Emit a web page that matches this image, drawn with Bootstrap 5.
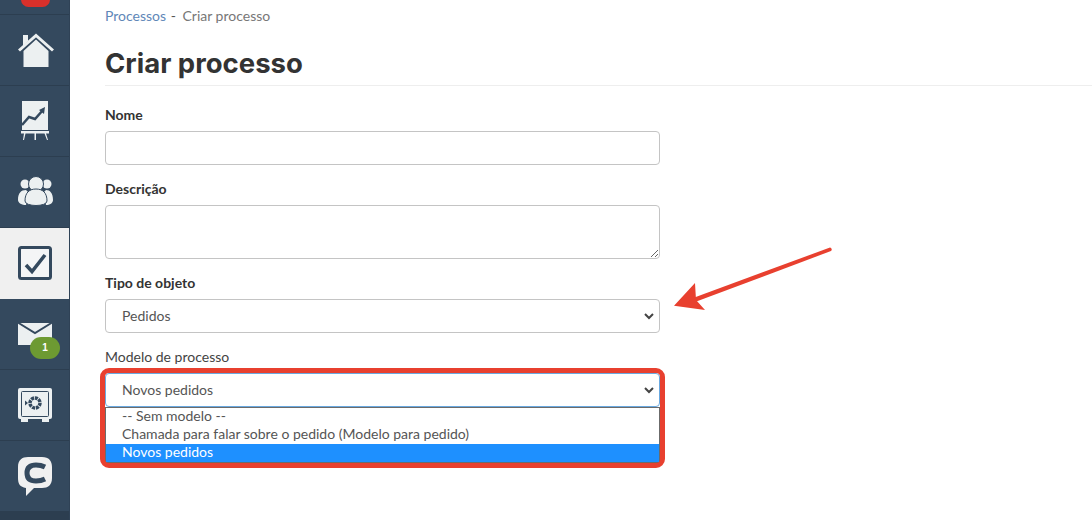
<!DOCTYPE html>
<html lang="pt">
<head>
<meta charset="utf-8">
<title>Criar processo</title>
<link href="https://cdn.jsdelivr.net/npm/bootstrap@5.3.0/dist/css/bootstrap.min.css" rel="stylesheet">
<style>
html,body{height:520px;overflow:hidden}
body{font-family:Lato,"Liberation Sans",sans-serif;font-size:14px;color:#333;background:#fff}
.rail{width:70px;height:520px;background:#34495e;flex:none;border-right:1px solid #2f4256;overflow:hidden}
.rail-top{height:15px;border-bottom:1px solid #2c3e50;position:relative}
.rail-pill{position:absolute;left:21px;top:-8px;width:29px;height:15px;border-radius:8px;background:#d9302b}
.rail-item{height:71px;border-bottom:1px solid #2c3e50;position:relative}
.rail-item.on{background:#f0f0f0;border-bottom:0;margin-right:-1px}
.rail-foot{height:8px;background:#2c3e50}
.rail-count{position:absolute;left:30px;top:38px;width:30px;height:22px;border-radius:11px;background:#6d9a32;color:#fff;font:700 10px/21px "Liberation Sans",sans-serif;text-align:center}
.page{flex:1 1 auto;position:relative;padding:0 0 0 35px;min-width:0}
.crumbs{height:34px;padding-top:6px;line-height:20px;color:#777}
.crumbs a{color:#5f87b8;text-decoration:none}
.crumbs span{color:#555;margin:0 3px 0 1px}
.head{font-family:Inter,sans-serif;font-weight:700;font-size:27.500px;line-height:34px;height:52px;padding-top:12px;margin:0;color:#333;border-bottom:1px solid #eee}
.formbox{width:555px;padding-top:19px}
.lbl{display:block;line-height:20px;height:20px;margin:0 0 6px;font-weight:700;color:#333}
.lbl.thin{font-weight:400;color:#444}
.fld{border:1px solid #c4c4c4;border-radius:4px;box-shadow:none;font-size:14px;color:#555;font-family:inherit;margin-bottom:14px}
.fld.short{height:34px;min-height:34px;padding:0 16px 2px}
.fld.tall{height:54px;min-height:54px}
.form-select.fld{background-image:url("data:image/svg+xml,%3csvg xmlns='http://www.w3.org/2000/svg' viewBox='0 0 10 7'%3e%3cpath fill='none' stroke='%23444' stroke-width='2' d='M1 1l4 4 4-4'/%3e%3c/svg%3e");background-size:10px 7px;background-position:right 5px center}
.fld.focus{border-color:#6aa9e0;margin-bottom:0}
.picker{position:relative;height:34px}
.pop{position:absolute;left:0;right:0;top:34px;border:1px solid #6b6b6b;background:#fff;padding:0;line-height:16px;color:#555;z-index:2}
.pop div{height:18px;padding-left:16px}
.pop .sel{background:#1e90ff;color:#fff}
.ring{position:absolute;left:30px;top:368px;width:565px;height:100px;border:5px solid #e8402f;border-radius:9px;z-index:3;pointer-events:none}
.pointer{position:absolute;left:600px;top:240px;z-index:3}
</style>
</head>
<body>
<div class="d-flex">
<nav class="rail">
 <div class="rail-top"><div class="rail-pill"></div></div>
 <div class="rail-item"><svg width="70" height="71" viewBox="0 0 70 71"><path fill="#ecf0f1" d="M23 20h5v6l-5 5zM23.500 36L36 24.500 48.500 36v16h-25z"/><path fill="none" stroke="#ecf0f1" stroke-width="3" d="M19 35.500L36 20.500 53 35.500"/></svg></div>
 <div class="rail-item"><svg width="70" height="71" viewBox="0 0 70 71"><path fill="#ecf0f1" d="M22 15h26v29H22z"/><path fill="none" stroke="#34495e" stroke-width="2.500" d="M22 39l7-8 6 2 8-9"/><path fill="#34495e" d="M45 21l-1 7-5-4z"/><path fill="#ecf0f1" d="M21 45h28v2.500H21zM24 47.500h1.500L24 54h-1zM34.500 47.500h1.500V54h-1.500zM44.500 47.500H46l2 6.500h-1z"/></svg></div>
 <div class="rail-item"><svg width="70" height="71" viewBox="0 0 70 71"><g fill="#ecf0f1"><circle cx="25" cy="27" r="4.500"/><circle cx="47" cy="27" r="4.500"/><path d="M18 43c0-7 3-10 8-10l3 3-3 12c-4 0-8-2-8-5zM53 43c0-7-3-10-7-10l-3 3 3 12c4 0 7-2 7-5z"/><circle cx="36" cy="27" r="7.500" stroke="#34495e"/><path stroke="#34495e" d="M25 44c0-8 4-12 11-12s11 4 11 12c0 6-22 6-22 0z"/></g></svg></div>
 <div class="rail-item on"><svg width="70" height="71" viewBox="0 0 70 71"><rect x="19.500" y="19.500" width="31" height="31" rx="2" fill="#f4f5f6" stroke="#34495e" stroke-width="3"/><path fill="none" stroke="#34495e" stroke-width="3.500" d="M26 37l6 6.500 13-16.500"/></svg></div>
 <div class="rail-item"><svg width="70" height="71" viewBox="0 0 70 71"><path fill="#ecf0f1" d="M18 24h34v22H18z"/><path fill="none" stroke="#34495e" stroke-width="2" d="M17 23l18 11 18-11"/></svg><span class="rail-count">1</span></div>
 <div class="rail-item"><svg width="70" height="71" viewBox="0 0 70 71"><rect x="18" y="18" width="34" height="31" rx="2" fill="#ecf0f1"/><path fill="#ecf0f1" d="M21 49h7v3h-7zM42 49h7v3h-7z"/><rect x="21.500" y="21.500" width="27" height="25" rx="1" fill="none" stroke="#34495e"/><circle cx="35" cy="33" r="5" fill="none" stroke="#34495e" stroke-width="3.500" stroke-dasharray="3 .8"/><path fill="#34495e" d="M25 30.500l3 2.500-3 2.500z"/></svg></div>
 <div class="rail-item"><svg width="70" height="71" viewBox="0 0 70 71"><path fill="#f0f0f0" d="M28 16h14c7 0 10 4 10 10v11c0 7-4 10-10 10h-8l-8 8v-8c-6-1-8-4-8-10V26c0-7 4-10 10-10z"/><path fill="none" stroke="#34495e" stroke-width="5" d="M45 26c-2-1-5-2-9-2-6 0-9 3-9 8s3 8 9 8c4 0 7-1 9-2"/></svg></div>
 <div class="rail-foot"></div>
</nav>
<main class="page">
 <div class="crumbs"><a href="#">Processos</a> <span>-</span> Criar processo</div>
 <h1 class="head">Criar processo</h1>
 <form class="formbox">
  <label class="lbl">Nome</label>
  <input class="form-control fld short" type="text">
  <label class="lbl">Descrição</label>
  <textarea class="form-control fld tall"></textarea>
  <label class="lbl">Tipo de objeto</label>
  <select class="form-select fld short"><option>Pedidos</option></select>
  <label class="lbl thin">Modelo de processo</label>
  <div class="picker">
   <select class="form-select fld short focus"><option>Novos pedidos</option></select>
   <div class="pop"><div>-- Sem modelo --</div><div>Chamada para falar sobre o pedido (Modelo para pedido)</div><div class="sel">Novos pedidos</div></div>
  </div>
 </form>
 <div class="ring"></div>
 <svg class="pointer" width="240" height="80" viewBox="0 0 240 80"><path fill="#e8402f" d="M160 7.500a2 2 0 0 1 1 3.500L25 62l-2-4z"/><path fill="#e8402f" d="M4 65.700L25 43l1 17 9 10z"/></svg>
</main>
</div>
</body>
</html>
